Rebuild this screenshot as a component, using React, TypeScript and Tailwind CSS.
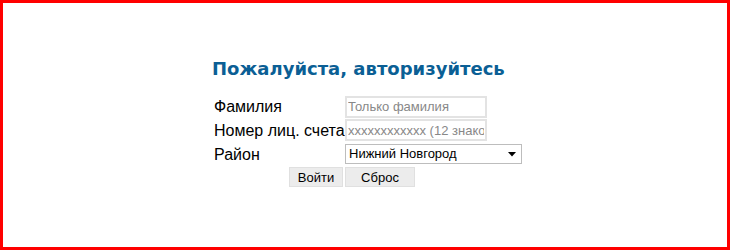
import React from "react";

export default function App() {
  const label = "text-[16px] leading-[23px] text-black";
  const lf = { fontFamily: "'Liberation Sans', Arial, sans-serif" };
  return (
    <div className="w-[730px] h-[250px] border-[3px] border-[#ff0000] bg-white box-border" style={lf}>
      <div className="pl-[209px] pt-[54px] flex flex-col">
        <h1 className="text-[18px] leading-[24px] font-bold text-[#0b5f95] m-0" style={{ fontFamily: "'DejaVu Sans', Verdana, sans-serif" }}>
          Пожалуйста, авторизуйтесь
        </h1>
        <div className="mt-[14px] flex flex-col">
          <div className="flex items-center h-[23px]">
            <span className={`${label} w-[133px] pl-[2px]`}>Фамилия</span>
            <input
              placeholder="Только фамилия"
              className="w-[142px] h-[22px] border-2 border-[#e3e3e3] px-[1px] text-[13px] placeholder:text-[#888] outline-none"
              style={lf}
            />
          </div>
          <div className="flex items-center h-[24px]">
            <span className={`${label} w-[133px] pl-[2px] whitespace-nowrap`}>Номер лиц. счета</span>
            <input
              placeholder="xxxxxxxxxxxx (12 знаков)"
              className="w-[142px] h-[22px] border-2 border-[#e3e3e3] px-[1px] text-[13px] placeholder:text-[#888] outline-none"
              style={lf}
            />
          </div>
          <div className="flex items-center h-[24px]">
            <span className={`${label} w-[133px] pl-[2px]`}>Район</span>
            <div className="relative w-[177px] h-[20px] border border-[#bdbdbd] bg-white flex items-center pl-[3px] text-[13px] text-black">
              Нижний Новгород
              <svg className="absolute right-[5px] top-[7px]" width="8" height="5" viewBox="0 0 8 5">
                <path d="M0 0 L8 0 L4 4.5 Z" fill="#000" />
              </svg>
            </div>
          </div>
          <div className="flex h-[21px] mt-[1px] pl-[77px] gap-[2px]">
            <button className="w-[54px] h-[20px] bg-[#ececec] border border-[#e0e0e0] text-[13px] text-black" style={lf}>Войти</button>
            <button className="w-[70px] h-[20px] bg-[#ececec] border border-[#e0e0e0] text-[13px] text-black" style={lf}>Сброс</button>
          </div>
        </div>
      </div>
    </div>
  );
}
